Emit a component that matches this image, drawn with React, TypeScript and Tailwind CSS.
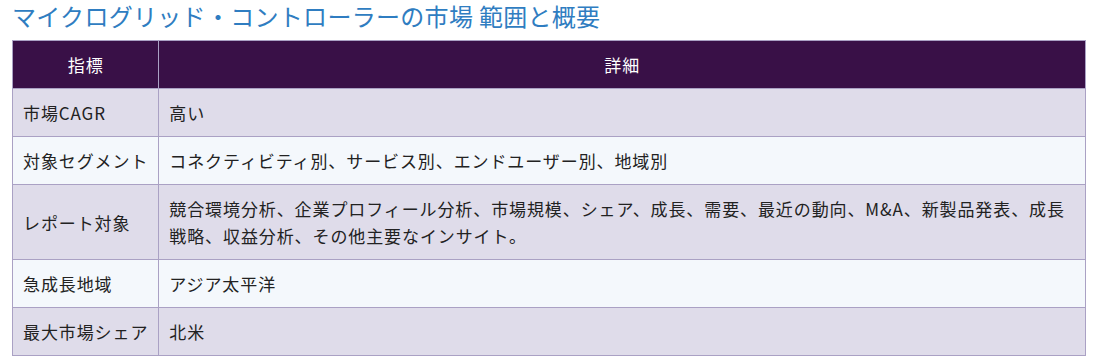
const rows: { label: string; detail: React.ReactNode }[] = [
  { label: "市場CAGR", detail: "高い" },
  { label: "対象セグメント", detail: "コネクティビティ別、サービス別、エンドユーザー別、地域別" },
  {
    label: "レポート対象",
    detail: (
      <>
        競合環境分析、企業プロフィール分析、市場規模、シェア、成長、需要、最近の動向、M&amp;A、新製品発表、成長
        <br />
        戦略、収益分析、その他主要なインサイト。
      </>
    ),
  },
  { label: "急成長地域", detail: "アジア太平洋" },
  { label: "最大市場シェア", detail: "北米" },
];

const App = () => {
  return (
    <div className="min-h-screen bg-white px-3 font-['Noto_Sans_CJK_JP',sans-serif] text-[#222]">
      <h2 className="h-[32px] mb-2 text-[24px] leading-[32px] tracking-[0.3px] text-[#2f7dc1] font-normal">
        マイクログリッド・コントローラーの市場 範囲と概要
      </h2>

      <table className="w-[1074px] border-collapse text-[17px] tracking-[0.9px]">
        <thead>
          <tr className="bg-[#391047] text-white">
            <th className="w-[146px] border border-[#aaa1c4] py-[10px] leading-[27px] font-normal text-center">指標</th>
            <th className="border border-[#aaa1c4] py-[10px] leading-[27px] font-normal text-center">詳細</th>
          </tr>
        </thead>
        <tbody>
          {rows.map((row, i) => (
            <tr key={row.label} className={i % 2 === 0 ? "bg-[#dfdcea]" : "bg-[#f4f8fc]"}>
              <td className="border border-[#aaa1c4] px-[10px] py-[10px] leading-[27px] whitespace-nowrap">
                {row.label}
              </td>
              <td className="border border-[#aaa1c4] px-[10px] py-[10px] leading-[27px]">{row.detail}</td>
            </tr>
          ))}
        </tbody>
      </table>
    </div>
  );
};

export default App;
